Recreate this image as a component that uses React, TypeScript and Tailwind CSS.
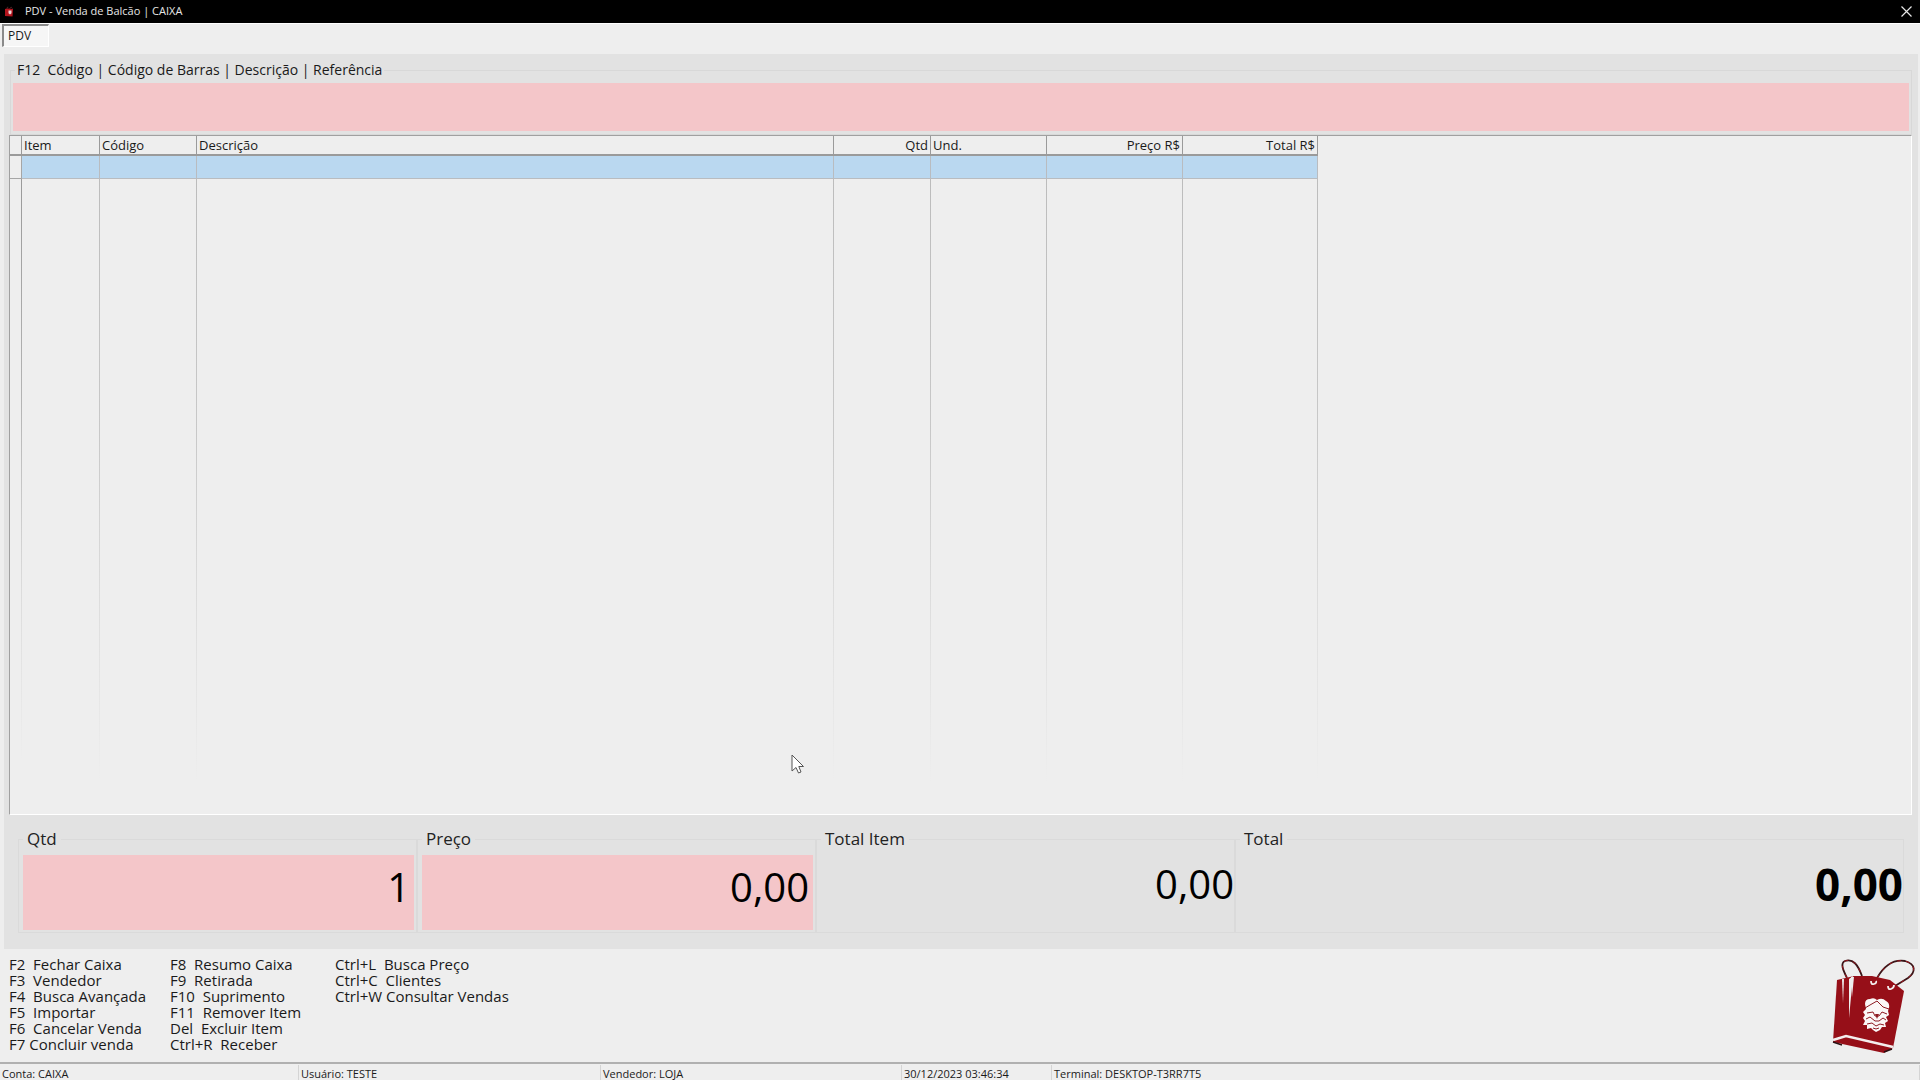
import type { ReactNode } from "react";

const columns = [
  { title: "Item", width: "w-[78px]", align: "text-left" },
  { title: "Código", width: "w-[97px]", align: "text-left" },
  { title: "Descrição", width: "w-[637px]", align: "text-left" },
  { title: "Qtd", width: "w-[97px]", align: "text-right" },
  { title: "Und.", width: "w-[116px]", align: "text-left" },
  { title: "Preço R$", width: "w-[136px]", align: "text-right" },
  { title: "Total R$", width: "w-[135px]", align: "text-right" },
];

const shortcuts = [
  {
    width: "w-[161px]",
    lines: [
      "F2  Fechar Caixa",
      "F3  Vendedor",
      "F4  Busca Avançada",
      "F5  Importar",
      "F6  Cancelar Venda",
      "F7 Concluir venda",
    ],
  },
  {
    width: "w-[165px]",
    lines: [
      "F8  Resumo Caixa",
      "F9  Retirada",
      "F10  Suprimento",
      "F11  Remover Item",
      "Del  Excluir Item",
      "Ctrl+R  Receber",
    ],
  },
  {
    width: "w-[240px]",
    lines: ["Ctrl+L  Busca Preço", "Ctrl+C  Clientes", "Ctrl+W Consultar Vendas"],
  },
];

const status = [
  { text: "Conta: CAIXA", width: "w-[299px]" },
  { text: "Usuário: TESTE", width: "w-[302px]" },
  { text: "Vendedor: LOJA", width: "w-[301px]" },
  { text: "30/12/2023 03:46:34", width: "w-[150px]" },
  { text: "Terminal: DESKTOP-T3RR7T5", width: "flex-1" },
];

function AppIcon() {
  return (
    <svg viewBox="0 0 10 12" className="ml-1 h-3 w-[10px]" aria-hidden="true">
      <path d="M1 3 L3 2.500 L9 3 L8.500 10.500 L1 10 Z" fill="#b3141d" />
      <path d="M3 2.500 Q3 .8 4.300 1.200 M5.500 2.500 Q7.500 0 8.500 2.500" fill="none" stroke="#6b3a3c" strokeWidth=".7" />
      <path d="M4.500 4.500h3v2.800l-1.500 1.200l-1.500-1.200z" fill="#f0d9d9" />
    </svg>
  );
}

function BagLogo() {
  return (
    <svg viewBox="0 0 84 98" className="h-[98px] w-[84px]" aria-label="Sacola">
      <g fill="none" stroke="#3a1518" strokeWidth="1.800">
        <path d="M15 21 C11 13 8 6 13 4 C21 1 26 8 30 19" />
        <path d="M45 21 C52 9 61 2 73 4 C84 7 84 15 76 21 L63 29" />
      </g>
      <g fill="none" stroke="#a01820" strokeWidth="1" strokeDasharray="4 5">
        <path d="M15 21 C11 13 8 6 13 4 C21 1 26 8 30 19" />
        <path d="M45 21 C52 9 61 2 73 4 C84 7 84 15 76 21 L63 29" />
      </g>
      <path d="M5 23 L22 19 L40 19 L58 23 L72 34 L61 91 L52 96 L1 85 Z" fill="#960f18" />
      <path d="M10 22 L12 22 L11 46 Z" fill="#eee" />
      <path d="M17 22 L21 19 L17 61 Z" fill="#eee" />
      <path d="M19 20 L22 20 L20 40 Z" fill="#eee" />
      <path d="M1 83 L14 79 L61 90" fill="none" stroke="#f4eeee" strokeWidth="2.500" />
      <path d="M1 85 L10 88 M52 95 L60 92" fill="none" stroke="#2a1012" strokeWidth="1.500" />
      <path d="M39 24 q0 4 3 3 q3 -1 2 -3 M56 29 q0 4 3 3 q3 -1 3 -4" fill="none" stroke="#f4eeee" strokeWidth="1.800" />
      <path
        d="M33 47 Q33 42 38 42 Q42 40 45 43 Q50 40 54 44 Q58 46 57 51 L56 54 L57 58 L54 60 L56 64 L53 66 L54 70 L50 70 L48 73 L44 75 L41 73 L39 71 L35 72 L35 68 L31 68 L33 64 L31 61 L33 58 L31 55 L34 52 Z"
        fill="#fbf7f7"
      />
      <path
        d="M33 51 L38 48 L45 44 L51 50 L57 52 M35 56 L41 55 L43 59 L47 59 L50 55 L55 57 M34 62 L38 60 L43 64 L47 64 L51 61 L54 63 M35 67 L40 66 L44 69 L48 67 L52 68 M41 71 L44 72 L47 71"
        fill="none"
        stroke="#8e1a22"
        strokeWidth="1"
      />
      <path d="M43 57 L45 62 L47 57 Z" fill="#8e1a22" />
    </svg>
  );
}

function Group({ id, label, className, children }: { id: string; label: string; className: string; children: ReactNode }) {
  return (
    <fieldset className={`h-[107px] min-w-0 border border-[#dadada] pl-1 ${className}`}>
      <legend className="px-1 text-[17px] leading-[26px] text-[#222]">
        <label htmlFor={id}>{label}</label>
      </legend>
      {children}
    </fieldset>
  );
}

export default function App() {
  return (
    <div className="flex h-screen flex-col overflow-hidden bg-[#eee] font-['Open_Sans','Noto_Sans',sans-serif] text-xs text-[#1a1a1a]">
      <header className="flex h-[23px] shrink-0 items-center bg-black text-[#e6e6e6]">
        <AppIcon />
        <h1 className="ml-[11px] flex-1 text-[11px]">PDV - Venda de Balcão | CAIXA</h1>
        <button type="button" aria-label="Fechar" className="mr-2 flex h-5 w-3 items-center justify-center">
          <svg viewBox="0 0 11 11" className="h-[11px] w-[11px]" stroke="#e6e6e6" strokeWidth="1.200">
            <path d="M.5 .5 L10.500 10.500 M10.500 .5 L.5 10.500" />
          </svg>
        </button>
      </header>

      <nav className="h-[31px] shrink-0 border-t border-white pl-[2px]">
        <button
          type="button"
          className="h-[23px] w-[47px] border-t-2 border-r border-b border-l-2 border-t-[#8a8a8a] border-r-white border-b-white border-l-[#8a8a8a] bg-[#f6f6f6] pl-1 text-left"
        >
          PDV
        </button>
      </nav>

      <main className="mr-[2px] ml-1 flex min-h-0 flex-1 flex-col bg-[#e2e2e2] pr-[6px] pl-[5px]">
        <fieldset className="mt-1 ml-px h-[77px] shrink-0 border border-[#d8d8d8] px-[2px]">
          <legend className="ml-[2px] px-[2px] pb-[2px] text-sm leading-[23px] whitespace-pre">
            <label htmlFor="busca">F12  Código | Código de Barras | Descrição | Referência</label>
          </legend>
          <input id="busca" className="block h-12 w-full bg-[#f4c6c9] px-2 text-2xl outline-none" />
        </fieldset>

        <section className="min-h-0 flex-1 border border-t-[#a0a0a0] border-r-white border-b-white border-l-[#a0a0a0] bg-[#eee]">
          <table className="h-full w-[1308px] table-fixed border-separate border-spacing-0">
            <thead>
              <tr className="h-5">
                <th className="w-3 border-r border-b-2 border-[#9a9a9a] p-0" />
                {columns.map(({ title, width, align }) => (
                  <th
                    key={title}
                    className={`${width} ${align} border-r border-b-2 border-[#9a9a9a] p-0 px-[2px] text-[13px] leading-[18px] font-normal`}
                  >
                    {title}
                  </th>
                ))}
              </tr>
            </thead>
            <tbody>
              <tr className="h-[23px]">
                <td className="border-r border-b border-[#a6a6a6] p-0" />
                {columns.map(({ title }) => (
                  <td key={title} className="border-r border-b border-[#b9bcc0] bg-[#bad8f0] p-0" />
                ))}
              </tr>
              <tr>
                <td className="bg-[linear-gradient(#9a9a9a,#b4b4b4_35%,#dcdcdc_65%,#eee_92%)] bg-[length:1px_100%] bg-right bg-no-repeat p-0" />
                {columns.map(({ title }) => (
                  <td
                    key={title}
                    className="bg-[linear-gradient(#bcbcbc,#c8c8c8_40%,#dcdcdc_65%,#eee_95%)] bg-[length:1px_100%] bg-right bg-no-repeat p-0"
                  />
                ))}
              </tr>
            </tbody>
          </table>
        </section>

        <section className="mt-[11px] mr-2 mb-[16px] ml-[9px] flex shrink-0 text-black">
          <Group id="qtd" label="Qtd" className="w-[399px] pr-[2px]">
            <input
              id="qtd"
              defaultValue="1"
              className="mt-[3px] block h-[75px] w-full bg-[#f4c6c9] pr-1 pb-3 text-right text-[40px] outline-none"
            />
          </Group>
          <Group id="preco" label="Preço" className="w-[399px] pr-[2px]">
            <input
              id="preco"
              defaultValue="0,00"
              className="mt-[3px] block h-[75px] w-full bg-[#f4c6c9] pr-1 pb-3 text-right text-[40px] outline-none"
            />
          </Group>
          <Group id="total-item" label="Total Item" className="w-[419px]">
            <output id="total-item" className="block text-right text-[40px] leading-[64px]">
              0,00
            </output>
          </Group>
          <Group id="total" label="Total" className="flex-1">
            <output id="total" className="block text-right text-[44px] leading-[64px] font-bold">
              0,00
            </output>
          </Group>
        </section>
      </main>

      <footer className="shrink-0">
        <div className="flex h-[113px] pt-[7px] pl-[9px]">
          {shortcuts.map(({ width, lines }) => (
            <ul key={width} className={`${width} text-[15px] leading-4 whitespace-pre`}>
              {lines.map((line) => (
                <li key={line}>{line}</li>
              ))}
            </ul>
          ))}
          <div className="ml-auto pt-px pr-1">
            <BagLogo />
          </div>
        </div>
        <div className="flex h-[18px] border-t-2 border-[#b0b0b0] text-[11px] leading-[17px]">
          {status.map(({ text, width }) => (
            <div key={text} className={`${width} mt-px border-r border-[#d4d4d4] pl-[2px]`}>
              {text}
            </div>
          ))}
        </div>
      </footer>

      <svg viewBox="0 0 14 20" className="pointer-events-none absolute top-[69.8%] left-[41.2%] h-5 w-[14px]" aria-hidden="true">
        <path d="M1 1 V17 L5 13.500 L7.500 19 L10 18 L7.800 12.500 H12.500 Z" fill="#fff" stroke="#555" />
      </svg>
    </div>
  );
}
